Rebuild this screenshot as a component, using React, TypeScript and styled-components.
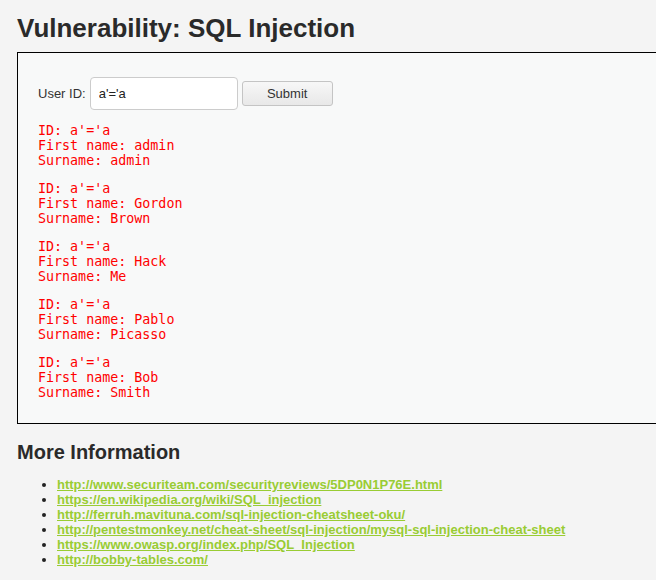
import React from "react";
import styled, { createGlobalStyle } from "styled-components";

const Global = createGlobalStyle`
  html, body { margin: 0; padding: 0; background: #f4f4f4; overflow: hidden; }
  body { font-family: "Liberation Sans", Arial, sans-serif; color: #2a2a2a; }
`;

const Page = styled.div`
  width: 700px;
  padding: 13px 0 0 17px;
`;

const Title = styled.h1`
  margin: 0 0 9px 0;
  font-size: 26px;
  line-height: 30px;
  font-weight: bold;
  color: #2a2a2a;
`;

const Box = styled.div`
  border: 1px solid #000;
  background: #f8f9f9;
  padding: 24px 20px 20px 20px;
  height: 326px;
`;

const Form = styled.form`
  display: flex;
  align-items: center;
  gap: 4px;
  margin: 0 0 13px 0;
`;

const Label = styled.label`
  font-size: 13px;
  color: #333;
`;

const Input = styled.input`
  box-sizing: border-box;
  width: 148px;
  height: 33px;
  border: 1px solid #ccc;
  border-radius: 4px;
  background: #fff;
  padding: 0 8px;
  font-family: "Liberation Sans", Arial, sans-serif;
  font-size: 13px;
  color: #222;
  outline: none;
`;

const Button = styled.button`
  box-sizing: border-box;
  width: 91px;
  height: 25px;
  border: 1px solid #c4c4c4;
  border-radius: 3px;
  background: linear-gradient(#f7f7f7, #e8e8e8);
  font-family: "Liberation Sans", Arial, sans-serif;
  font-size: 13px;
  color: #333;
`;

const Result = styled.pre`
  margin: 0 0 13px 0;
  font-family: "DejaVu Sans Mono", monospace;
  font-size: 13.33px;
  line-height: 15px;
  color: #ff0000;
`;

const SubTitle = styled.h2`
  margin: 16px 0 13px 0;
  font-size: 20px;
  line-height: 24px;
  font-weight: bold;
  color: #2a2a2a;
`;

const List = styled.ul`
  margin: 0;
  padding-left: 40px;
`;

const Item = styled.li`
  font-size: 13px;
  line-height: 15px;
  color: #222;
`;

const Link = styled.a`
  color: #99cc33;
  font-weight: bold;
  text-decoration: underline;
`;

const rows = [
  ["admin", "admin"],
  ["Gordon", "Brown"],
  ["Hack", "Me"],
  ["Pablo", "Picasso"],
  ["Bob", "Smith"],
];

const links = [
  "http://www.securiteam.com/securityreviews/5DP0N1P76E.html",
  "https://en.wikipedia.org/wiki/SQL_injection",
  "http://ferruh.mavituna.com/sql-injection-cheatsheet-oku/",
  "http://pentestmonkey.net/cheat-sheet/sql-injection/mysql-sql-injection-cheat-sheet",
  "https://www.owasp.org/index.php/SQL_Injection",
  "http://bobby-tables.com/",
];

export default function App() {
  return (
    <Page>
      <Global />
      <Title>Vulnerability: SQL Injection</Title>
      <Box>
        <Form onSubmit={(e) => e.preventDefault()}>
          <Label>User ID:</Label>
          <Input defaultValue="a'='a" />
          <Button type="submit">Submit</Button>
        </Form>
        {rows.map(([f, s], i) => (
          <Result key={i}>{`ID: a'='a\nFirst name: ${f}\nSurname: ${s}`}</Result>
        ))}
      </Box>
      <SubTitle>More Information</SubTitle>
      <List>
        {links.map((l) => (
          <Item key={l}>
            <Link href="#">{l}</Link>
          </Item>
        ))}
      </List>
    </Page>
  );
}
